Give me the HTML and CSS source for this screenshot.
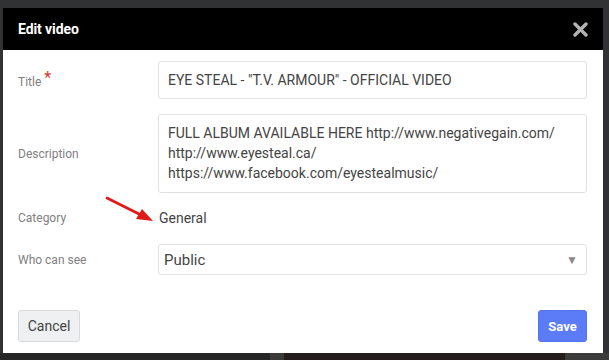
FILE: index.html
```html
<!DOCTYPE html>
<html lang="en">
<head>
    <meta charset="UTF-8">
    <meta name="viewport" content="width=device-width, initial-scale=1.0">
    <title>Edit video</title>
    <link rel="stylesheet" href="styles.css">
</head>
<body>
    <!-- Modal -->
    <div class="modal">
        <div class="modal-header">
            <h1 class="modal-title">Edit video</h1>
            <svg class="close-btn" width="15" height="15" viewBox="0 0 15 15">
                <path d="M2 2 L13 13 M13 2 L2 13" stroke="#b3b3b3" stroke-width="3.4" stroke-linecap="round"/>
            </svg>
        </div>

        <form class="modal-body">
            <div class="row row-title">
                <label class="label">Title<span class="req">*</span></label>
                <div class="field">EYE STEAL - "T.V. ARMOUR" - OFFICIAL VIDEO</div>
            </div>

            <div class="row row-desc">
                <label class="label">Description</label>
                <div class="field area">FULL ALBUM AVAILABLE HERE http://www.negativegain.com/<br>http://www.eyesteal.ca/<br>https://www.facebook.com/eyestealmusic/</div>
            </div>

            <div class="row row-cat">
                <label class="label">Category</label>
                <div class="plain">General</div>
            </div>

            <div class="row row-who">
                <label class="label">Who can see</label>
                <div class="field select">
                    <span>Public</span>
                    <span class="caret">&#9660;</span>
                </div>
            </div>

            <div class="actions">
                <button class="btn btn-cancel" type="button">Cancel</button>
                <button class="btn btn-save" type="button">Save</button>
            </div>

            <!-- seta vermelha -->
            <svg class="arrow" width="60" height="32" viewBox="0 0 60 32">
                <line x1="2" y1="2" x2="36" y2="19" stroke="#e01818" stroke-width="2.6" stroke-linecap="round"/>
                <polygon points="48,25 31,23 37,13" fill="#e01818"/>
            </svg>
        </form>
    </div>

    <div class="backdrop-bottom">
        <div class="bg1"></div>
        <div class="bg2"></div>
        <div class="bg3"></div>
        <div class="bg4"></div>
    </div>
</body>
</html>
```

FILE: styles.css
```css
* {
    margin: 0;
    padding: 0;
    box-sizing: border-box;
}

body {
    background-color: #303234;
    font-family: Roboto, 'Liberation Sans', sans-serif;
    padding: 8px 0 0 3px;
    height: 360px;
    overflow: hidden;
}

/* Modal */
.modal {
    width: 600px;
    height: 345px;
    background-color: #fff;
    display: flex;
    flex-direction: column;
}

.modal-header {
    height: 42px;
    background-color: #000;
    display: flex;
    align-items: center;
    justify-content: space-between;
    padding: 0 15px 0 15px;
}

.modal-title {
    color: #fff;
    font-size: 14px;
    font-weight: 700;
    letter-spacing: -0.1px;
}

.close-btn {
    margin-top: 1px;
}

.modal-body {
    position: relative;
    padding: 11px 16px 0 15px;
    display: flex;
    flex-direction: column;
}

.row {
    display: flex;
    align-items: center;
}

.label {
    width: 140px;
    font-size: 12px;
    color: #808080;
}

.req {
    color: #e03030;
    font-size: 16px;
    margin-left: 3px;
    position: relative;
    top: -3px;
}

.field {
    width: 429px;
    border: 1px solid #e2e2e2;
    border-radius: 3px;
    color: #444;
    font-size: 14px;
}

.row-title .field {
    height: 38px;
    padding: 0 9px;
    display: flex;
    align-items: center;
}

.row-desc {
    margin-top: 15px;
}

.area {
    height: 79px;
    padding: 8px 9px;
    line-height: 20px;
}

.row-cat {
    margin-top: 15px;
    height: 20px;
}

.plain {
    font-size: 14px;
    color: #444;
    padding-left: 1px;
}

.row-who {
    margin-top: 16px;
}

.select {
    height: 31px;
    padding: 0 8px 0 5px;
    display: flex;
    align-items: center;
    justify-content: space-between;
    font-size: 15px;
}

.caret {
    color: #8a8a8a;
    font-size: 12px;
}

.actions {
    display: flex;
    justify-content: space-between;
    margin-top: 35px;
}

.btn {
    height: 32px;
    border-radius: 3px;
    font-family: Roboto, 'Liberation Sans', sans-serif;
    font-size: 14px;
    cursor: pointer;
}

.btn-cancel {
    width: 62px;
    background-color: #eef0f1;
    border: 1px solid #d8dadb;
    color: #444;
}

.btn-save {
    width: 49px;
    background-color: #5b7cf6;
    border: 1px solid #5474ee;
    color: #fff;
    font-weight: 700;
    font-size: 13px;
}

.arrow {
    position: absolute;
    left: 102px;
    top: 146px;
}

/* fundo atrás do modal */
.backdrop-bottom {
    display: flex;
    height: 7px;
    margin-left: -3px;
}

.bg1 { width: 270px; background-color: #262626; }
.bg2 { width: 14px; background-color: #3a3a3a; }
.bg3 { width: 281px; background-color: #231e1c; }
.bg4 { flex-grow: 1; background-color: #3b3b3b; }
```
